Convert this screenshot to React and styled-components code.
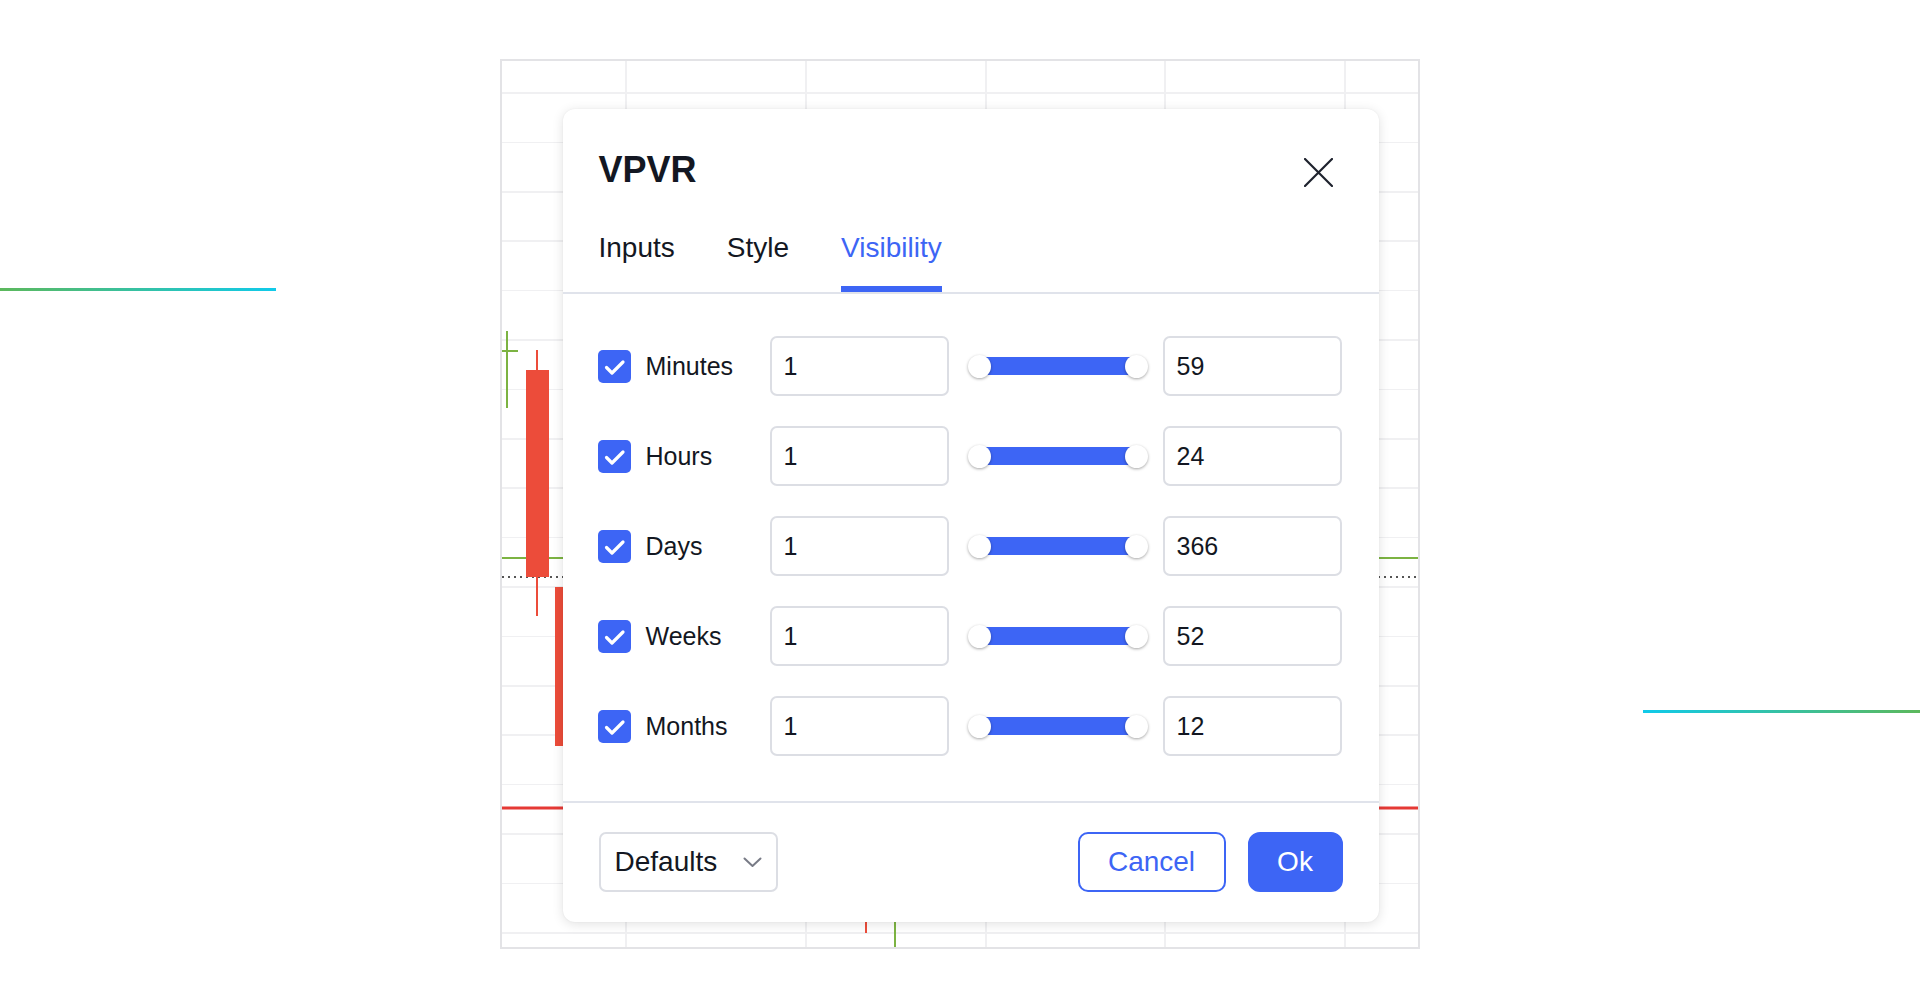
import React, { useState } from 'react';
import styled, { createGlobalStyle } from 'styled-components';

const BLUE = '#3d65f5';
const INK = '#131722';

const GlobalStyle = createGlobalStyle`
  html, body {
    margin: 0;
    padding: 0;
    background: #fff;
  }
  body {
    font-family: "Liberation Sans", Arial, sans-serif;
    color: ${INK};
  }
  * {
    box-sizing: border-box;
  }
`;

const Page = styled.div`
  width: 1920px;
  height: 1008px;
  display: grid;
  grid-template-columns: 276px 1fr 920px 1fr 277px;
  overflow: hidden;
`;

const AccentLine = styled.div`
  grid-row: 1;
  grid-column: ${(p) => (p.$side === 'left' ? 1 : 5)};
  align-self: start;
  margin-top: ${(p) => p.$top}px;
  height: 3px;
  background: linear-gradient(
    to ${(p) => (p.$side === 'left' ? 'right' : 'left')},
    #5cb85c,
    #10caea
  );
`;

const Stage = styled.div`
  grid-row: 1;
  grid-column: 3;
  align-self: center;
  width: 920px;
  height: 890px;
  display: grid;
`;

const ChartFrame = styled.div`
  grid-area: 1 / 1;
  border: 2px solid #e3e3e6;
  background: #fff;
`;

const ChartSvg = styled.svg`
  display: block;
  width: 100%;
  height: 100%;
`;

const Dialog = styled.div`
  grid-area: 1 / 1;
  align-self: start;
  justify-self: start;
  margin: 50px 0 0 63px;
  width: 816px;
  background: #fff;
  border-radius: 12px;
  box-shadow: 0 2px 12px rgba(0, 0, 0, 0.12), 0 0 2px rgba(0, 0, 0, 0.06);
  display: flex;
  flex-direction: column;
`;

const Header = styled.div`
  display: flex;
  align-items: center;
  justify-content: space-between;
  padding: 37px 38px 0 36px;
`;

const Title = styled.h2`
  margin: 0;
  font-size: 36px;
  line-height: 44px;
  font-weight: 700;
  color: ${INK};
`;

const CloseButton = styled.button`
  width: 44px;
  height: 44px;
  padding: 0;
  border: 0;
  background: none;
  display: flex;
  align-items: center;
  justify-content: center;
  margin-top: 4px;
  cursor: pointer;
`;

const TabBar = styled.div`
  display: flex;
  gap: 52px;
  margin-top: 37px;
  padding: 0 36px;
  border-bottom: 2px solid #e0e3eb;
`;

const Tab = styled.button`
  padding: 0 0 21px;
  border: 0;
  border-bottom: 6px solid ${(p) => (p.$active ? BLUE : 'transparent')};
  background: none;
  font-family: inherit;
  font-size: 28px;
  line-height: 34px;
  color: ${(p) => (p.$active ? BLUE : INK)};
  cursor: pointer;
`;

const Body = styled.div`
  display: flex;
  flex-direction: column;
  gap: 30px;
  padding: 42px 37px 45px 36px;
`;

const Row = styled.div`
  display: grid;
  grid-template-columns: 173px 179px 1fr 179px;
  align-items: center;
  height: 60px;
`;

const CheckLabel = styled.label`
  display: flex;
  align-items: center;
  gap: 15px;
  font-size: 25px;
  color: ${INK};
  margin-left: -1px;
`;

const CheckBox = styled.span`
  width: 33px;
  height: 33px;
  border-radius: 5px;
  background: ${BLUE};
  display: flex;
  align-items: center;
  justify-content: center;
  flex: none;
`;

const NumberField = styled.input`
  width: 179px;
  height: 60px;
  margin-left: ${(p) => (p.$shift ? -2 : 0)}px;
  border: 2px solid #dcdee4;
  border-radius: 7px;
  padding: 0 12px;
  font-family: inherit;
  font-size: 25px;
  color: ${INK};
  background: #fff;
  outline: none;
`;

const SliderCell = styled.div`
  padding: 0 15px 0 17px;
`;

const Slider = styled.div`
  display: flex;
  align-items: center;
  height: 24px;
`;

const Track = styled.div`
  flex: 1;
  height: 18px;
  margin: 0 -11.5px;
  background: ${BLUE};
`;

const Thumb = styled.span`
  position: relative;
  z-index: 1;
  width: 23px;
  height: 23px;
  flex: none;
  border-radius: 50%;
  background: #fff;
  box-shadow: 0 1px 3px rgba(0, 0, 0, 0.35);
`;

const Footer = styled.div`
  display: flex;
  align-items: center;
  justify-content: space-between;
  padding: 29px 36px 30px 36px;
  border-top: 2px solid #e0e3eb;
`;

const Select = styled.button`
  width: 179px;
  height: 60px;
  display: flex;
  align-items: center;
  justify-content: space-between;
  padding: 0 14px 0 14px;
  border: 2px solid #dcdee4;
  border-radius: 7px;
  background: #fff;
  font-family: inherit;
  font-size: 28px;
  color: ${INK};
  cursor: pointer;
`;

const Actions = styled.div`
  display: flex;
  gap: 22px;
`;

const ActionButton = styled.button`
  height: 60px;
  min-width: ${(p) => (p.$primary ? 95 : 148)}px;
  padding: 0 20px;
  border: 2px solid ${BLUE};
  border-radius: ${(p) => (p.$primary ? 12 : 10)}px;
  background: ${(p) => (p.$primary ? BLUE : '#fff')};
  color: ${(p) => (p.$primary ? '#fff' : BLUE)};
  font-family: inherit;
  font-size: 28px;
  cursor: pointer;
`;

const ranges = [
  { label: 'Minutes', from: 1, to: 59 },
  { label: 'Hours', from: 1, to: 24 },
  { label: 'Days', from: 1, to: 366 },
  { label: 'Weeks', from: 1, to: 52 },
  { label: 'Months', from: 1, to: 12 },
];

const vLines = [124, 304, 484, 663, 843];
const hLines = Array.from({ length: 18 }, (_, i) => 32 + i * 49.4);

const Chart = () => (
  <ChartSvg viewBox="0 0 916 886" preserveAspectRatio="none">
    <g stroke="#f0f0f2" strokeWidth="1.5" shapeRendering="crispEdges">
      {vLines.map((x) => (
        <line key={`v${x}`} x1={x} y1="0" x2={x} y2="886" />
      ))}
      {hLines.map((y) => (
        <line key={`h${y}`} x1="0" y1={y} x2="916" y2={y} />
      ))}
    </g>
    <line x1="0" y1="497" x2="916" y2="497" stroke="#7cb342" strokeWidth="2" />
    <line x1="0" y1="516" x2="916" y2="516" stroke="#555" strokeWidth="2" strokeDasharray="2 4" />
    <line x1="0" y1="747" x2="916" y2="747" stroke="#e53935" strokeWidth="3" />
    <g stroke="#7cb342" strokeWidth="2">
      <line x1="5" y1="270" x2="5" y2="347" />
      <line x1="0" y1="290" x2="16" y2="290" />
      <line x1="393" y1="840" x2="393" y2="886" />
    </g>
    <g fill="#ec4c3a">
      <rect x="34" y="289" width="2" height="266" />
      <rect x="24" y="309" width="23" height="207" />
      <rect x="53" y="526" width="24" height="159" />
      <rect x="363" y="840" width="2" height="32" />
    </g>
  </ChartSvg>
);

const CheckIcon = () => (
  <svg width="33" height="33" viewBox="0 0 33 33" fill="none">
    <path d="M8.5 17.5 L14 23 L25 12" stroke="#fff" strokeWidth="3.2" strokeLinecap="round" strokeLinejoin="round" />
  </svg>
);

const CloseIcon = () => (
  <svg width="29" height="29" viewBox="0 0 29 29" fill="none">
    <path d="M1 1 L28 28 M28 1 L1 28" stroke="#1e222d" strokeWidth="2.2" strokeLinecap="round" />
  </svg>
);

const Chevron = () => (
  <svg width="19" height="11" viewBox="0 0 19 11" fill="none">
    <path d="M1.5 1.5 L9.5 9 L17.5 1.5" stroke="#787b86" strokeWidth="2" strokeLinecap="round" strokeLinejoin="round" />
  </svg>
);

const App = () => {
  const [tab, setTab] = useState('Visibility');

  return (
    <>
      <GlobalStyle />
      <Page>
        <AccentLine $side="left" $top={288} />
        <Stage>
          <ChartFrame>
            <Chart />
          </ChartFrame>
          <Dialog>
            <Header>
              <Title>VPVR</Title>
              <CloseButton aria-label="Close">
                <CloseIcon />
              </CloseButton>
            </Header>
            <TabBar>
              {['Inputs', 'Style', 'Visibility'].map((name) => (
                <Tab key={name} $active={tab === name} onClick={() => setTab(name)}>
                  {name}
                </Tab>
              ))}
            </TabBar>
            <Body>
              {ranges.map((r) => (
                <Row key={r.label}>
                  <CheckLabel>
                    <CheckBox>
                      <CheckIcon />
                    </CheckBox>
                    {r.label}
                  </CheckLabel>
                  <NumberField $shift defaultValue={r.from} />
                  <SliderCell>
                    <Slider>
                      <Thumb />
                      <Track />
                      <Thumb />
                    </Slider>
                  </SliderCell>
                  <NumberField defaultValue={r.to} />
                </Row>
              ))}
            </Body>
            <Footer>
              <Select>
                Defaults
                <Chevron />
              </Select>
              <Actions>
                <ActionButton>Cancel</ActionButton>
                <ActionButton $primary>Ok</ActionButton>
              </Actions>
            </Footer>
          </Dialog>
        </Stage>
        <AccentLine $side="right" $top={710} />
      </Page>
    </>
  );
};

export default App;
